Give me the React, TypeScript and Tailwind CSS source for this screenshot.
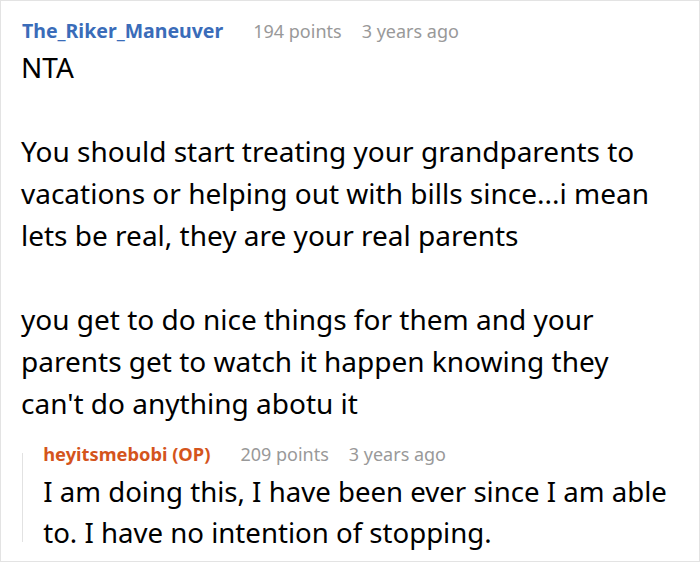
const BODY = 'font-["Noto_Sans",sans-serif]'

const Meta = ({ points, age }: { points: number; age: string }) => (
  <>
    <span className="ml-[30px]">{points} points</span>
    <span className="ml-[20px]">{age}</span>
  </>
)

export default function App() {
  return (
    <div className={`w-[700px] h-[562px] bg-white border border-[#e3e3e3] overflow-hidden text-black ${BODY}`}>
      <div className="pl-[20px] pt-[16px]">
        <div className="flex items-baseline h-[28px] leading-[28px] text-[18px] text-[#999999]">
          <span className="ml-[1px] text-[19.5px] font-bold text-[#3a6cb9]">The_Riker_Maneuver</span>
          <Meta points={194} age="3 years ago" />
        </div>

        <div className="mt-[1px] pr-[30px] text-[28px] leading-[42px] whitespace-pre-line">
          {`NTA

You should start treating your grandparents to vacations or helping out with bills since...i mean lets be real, they are your real parents

you get to do nice things for them and your parents get to watch it happen knowing they can't do anything abotu it`}
        </div>

        <div className="flex mt-[16px]">
          <div className="ml-[1px] mt-[13px] mb-[11px] w-[2px] bg-[#e2e2e2]" />
          <div className="pl-[20px]">
            <div className="flex items-baseline h-[28px] leading-[28px] text-[18px] text-[#999999]">
              <span className="text-[18.3px] font-bold text-[#d4541c]">heyitsmebobi (OP)</span>
              <Meta points={209} age="3 years ago" />
            </div>
            <div className="mt-[3px] text-[27.6px] leading-[41px]">
              I am doing this, I have been ever since I am able to. I have no intention of stopping.
            </div>
          </div>
        </div>
      </div>
    </div>
  )
}
